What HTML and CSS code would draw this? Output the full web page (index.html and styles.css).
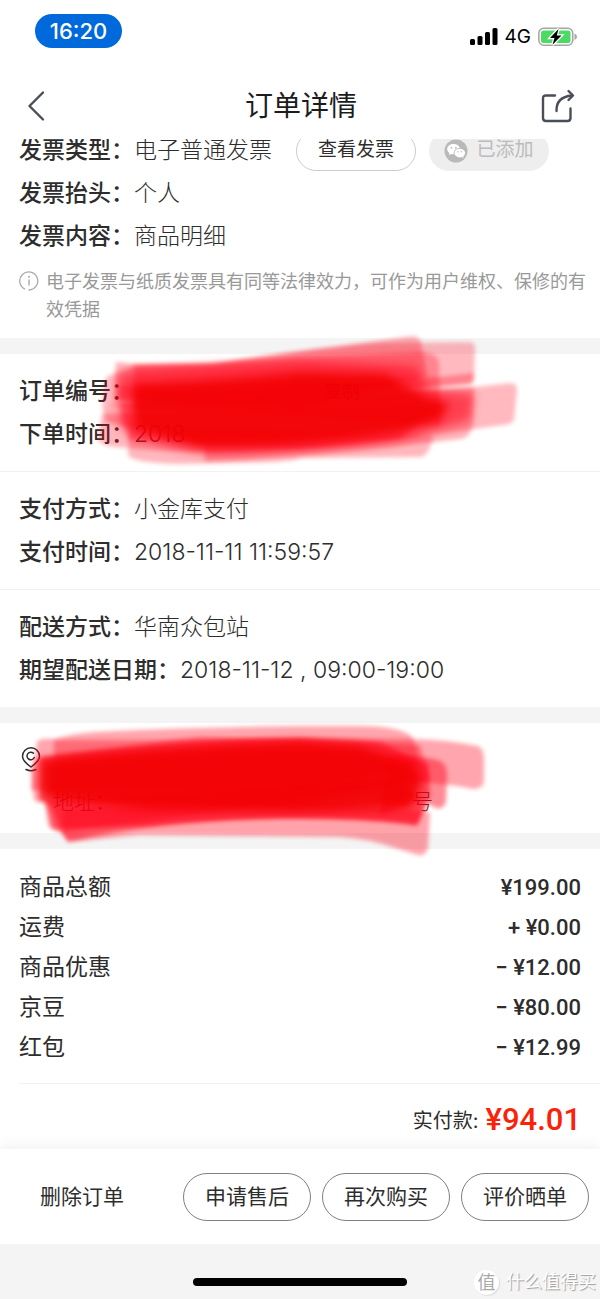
FILE: index.html
```html
<!DOCTYPE html>
<html lang="zh-CN">
<head>
    <meta charset="UTF-8">
    <meta name="viewport" content="width=device-width, initial-scale=1.0">
    <title>订单详情</title>
    <link rel="stylesheet" href="styles.css">
</head>
<body>

<div class="status-bar">
    <span class="time">16:20</span>
    <div class="status-icons">
        <svg width="28" height="18" viewBox="0 0 28 18">
            <rect x="0" y="11" width="5" height="6" rx="1.5"/>
            <rect x="7.500" y="8" width="5" height="9" rx="1.5"/>
            <rect x="15" y="4" width="5" height="13" rx="1.5"/>
            <rect x="22.500" y="0" width="5" height="17" rx="1.5"/>
        </svg>
        <span class="network">4G</span>
        <svg width="40" height="20" viewBox="0 0 40 20">
            <rect x="0.800" y="1.200" width="34" height="17" rx="5" fill="#fff" stroke="#a6a6a6" stroke-width="1.500"/>
            <rect x="3" y="3.500" width="29.500" height="12.500" rx="2.500" fill="#4cd964"/>
            <path d="M36.500 6.500 Q39 7.500 39 9.800 Q39 12 36.500 13Z" fill="#a6a6a6"/>
            <path d="M20.500 2 L12 11 L16.500 11 L14.500 17.800 L23.500 8.500 L18.800 8.500Z" fill="#000" stroke="#fff" stroke-width="2.600" paint-order="stroke"/>
        </svg>
    </div>
</div>

<header class="nav">
    <button class="icon-btn" aria-label="返回">
        <svg width="20" height="32" viewBox="0 0 20 32">
            <path d="M16 2.500 L2.500 16 L16 29.500" fill="none" stroke="#4a4e59" stroke-width="2.400" stroke-linecap="round" stroke-linejoin="round"/>
        </svg>
    </button>
    <h1>订单详情</h1>
    <button class="icon-btn" aria-label="分享">
        <svg width="34" height="34" viewBox="0 0 34 34" fill="none" stroke="#4a4e59" stroke-width="2.400" stroke-linecap="round" stroke-linejoin="round">
            <path d="M14 6.500 H5 Q2 6.500 2 9.500 V29 Q2 32 5 32 H26.500 Q29.500 32 29.500 29 V19.500"/>
            <path d="M15.500 22 Q15 8 31 6.500"/>
            <path d="M27.500 2 L32 6.500 L27.500 11"/>
        </svg>
    </button>
</header>

<main>
    <section class="invoice">
        <div class="row">
            <span class="label">发票类型：</span>
            <span class="value">电子普通发票</span>
            <div class="invoice-actions">
                <button class="pill">查看发票</button>
                <button class="pill pill-disabled" disabled>
                    <svg width="24" height="24" viewBox="0 0 24 24">
                        <circle cx="12" cy="12" r="11.500" fill="#b9b9b9"/>
                        <path d="M9.500 5 C5.800 5 3.200 7.200 3.200 10 C3.200 11.700 4 13 5.400 14 L4.900 16 L7.200 14.900 Q8.500 15.200 9.800 15.100 C9.300 11.500 12 8.900 15.700 9 C15.200 6.600 12.700 5 9.500 5Z" fill="#fff"/>
                        <path d="M15.700 9.800 C12.700 9.800 10.500 11.700 10.500 14.100 C10.500 16.600 12.900 18.400 15.700 18.400 Q16.800 18.400 17.800 18.100 L19.700 19 L19.200 17.300 C20.400 16.500 21.100 15.400 21.100 14.100 C21.100 11.700 18.700 9.800 15.700 9.800Z" fill="#fff"/>
                        <g fill="#b9b9b9">
                            <circle cx="7.500" cy="8.800" r=".9"/>
                            <circle cx="11.800" cy="8.800" r=".9"/>
                            <circle cx="14" cy="12.800" r=".7"/>
                            <circle cx="17.500" cy="12.800" r=".7"/>
                        </g>
                    </svg>
                    已添加
                </button>
            </div>
        </div>
        <div class="row">
            <span class="label">发票抬头：</span>
            <span class="value">个人</span>
        </div>
        <div class="row">
            <span class="label">发票内容：</span>
            <span class="value">商品明细</span>
        </div>
        <div class="note">
            <svg width="20" height="20" viewBox="0 0 20 20" fill="none" stroke="#aaa">
                <path d="M6 18.200 A9 9 0 1 1 9.500 19" stroke-width="1.300"/>
                <path d="M10 8.500 V14.500" stroke-width="1.400"/>
                <circle cx="10" cy="5.800" r="1" fill="#aaa" stroke="none"/>
            </svg>
            <p>电子发票与纸质发票具有同等法律效力，可作为用户维权、保修的有效凭据</p>
        </div>
    </section>

    <section class="order">
        <div class="group">
            <div class="row">
                <span class="label">订单编号：</span>
                <button class="copy">复制</button>
            </div>
            <div class="row">
                <span class="label">下单时间：</span>
                <span class="value">2018</span>
            </div>
            <svg class="marker marker-order" viewBox="0 0 600 150" aria-hidden="true">
                <defs>
                    <filter id="soft" x="-5%" y="-15%" width="110%" height="130%"><feGaussianBlur stdDeviation="2"/></filter>
                    <filter id="softer" x="-5%" y="-15%" width="110%" height="130%"><feGaussianBlur stdDeviation="5"/></filter>
                </defs>
                <g fill="#ff0018">
                    <path filter="url(#soft)" opacity=".3" d="M116 32 L134 34 L210 34 Q260 28 300 22 L412 6 Q419 6 421 12 L427 46 L300 80 L114 70Z"/>
                    <path filter="url(#soft)" opacity=".27" d="M134 35 L215 34 Q300 18 380 13 L470 12 Q475 13 475 18 L474 50 Q472 54 466 54 L134 80Z"/>
                    <path filter="url(#soft)" opacity=".28" d="M106 47 L134 36 Q250 32 300 28 L420 22 Q436 22 439 32 L441 95 L102 75Z"/>
                    <path filter="url(#soft)" opacity=".3" d="M118 55 Q250 60 300 50 L440 47 L474 43 L472 54 L300 70 L118 70Z"/>
                    <path filter="url(#soft)" opacity=".27" d="M120 75 L300 66 Q420 64 510 53 Q517 53 517 60 L514 90 Q511 95 503 95 Q400 110 300 118 L128 110Z"/>
                    <path filter="url(#soft)" opacity=".3" d="M102 76 L118 73 L474 58 L473 92 Q471 108 460 109 Q300 128 205 131 L205 115 L106 92Z"/>
                    <path filter="url(#soft)" opacity=".28" d="M102 84 L98 110 Q100 115 115 117 Q250 130 400 108 L440 75Z"/>
                    <path filter="url(#soft)" opacity=".28" d="M130 95 L128 125 Q132 133 180 134 Q300 133 300 128 L420 127 Q430 126 433 105 L300 100Z"/>
                    <path filter="url(#softer)" opacity=".5" d="M118 45 L134 40 L300 30 L415 36 L430 60 L474 64 L470 90 L395 112 Q300 124 205 124 L180 120 L134 108 L120 96Z"/>
                </g>
                <path fill="#f20000" opacity=".84" filter="url(#softer)" d="M133 54 Q250 48 300 42 L385 44 L425 66 L450 74 L440 90 L400 102 Q290 118 200 117 L175 110 L134 98Z"/>
            </svg>
        </div>
        <div class="group">
            <div class="row">
                <span class="label">支付方式：</span>
                <span class="value">小金库支付</span>
            </div>
            <div class="row">
                <span class="label">支付时间：</span>
                <span class="value">2018-11-11 11:59:57</span>
            </div>
        </div>
        <div class="group">
            <div class="row">
                <span class="label">配送方式：</span>
                <span class="value">华南众包站</span>
            </div>
            <div class="row">
                <span class="label">期望配送日期：</span>
                <span class="value">2018-11-12 , 09:00-19:00</span>
            </div>
        </div>
    </section>

    <section class="address">
        <svg class="pin" width="20" height="26" viewBox="0 0 20 26" fill="none" stroke="#2e2d2d" stroke-width="1.500" stroke-linecap="round">
            <path d="M10 20 Q1.500 14 1.500 9.300 A8.500 8.500 0 0 1 18.500 9.300 Q18.500 14 10 20Z"/>
            <path d="M12.500 6.300 A3.800 3.800 0 1 0 13.300 10.500"/>
            <path d="M5 22.500 Q10 24.800 15 22.500"/>
        </svg>
        <div class="address-text">
            <span>地址：</span>
            <span>号</span>
        </div>
        <svg class="marker marker-address" viewBox="0 0 600 150" aria-hidden="true">
            <g fill="#ff0018">
                <path filter="url(#soft)" opacity=".35" d="M37 22 Q38 18 55 19 Q70 14 95 12 Q200 7 300 6 L360 6 Q395 6 410 15 Q416 20 419 45 L300 70 L31 70Z"/>
                <path filter="url(#soft)" opacity=".35" d="M54 20 Q200 20 300 18 L410 19 Q450 20 478 26 Q483 28 484 37 L484 62 Q482 69 474 69 Q440 62 400 62 L300 85 L54 80Z"/>
                <path filter="url(#soft)" opacity=".35" d="M31 50 L34 80 Q36 82 45 82 L48 105 L52 109 L66 112 L430 60 L420 25 L200 17 L36 38Z"/>
                <path filter="url(#soft)" opacity=".45" d="M390 35 Q430 36 442 42 Q447 46 447 55 L446 82 Q443 90 436 88 L420 80 L380 95Z"/>
                <path filter="url(#soft)" opacity=".5" d="M45 80 L50 98 L52 108 L61 112 L68 121 L76 120 Q170 98 300 98 Q390 99 416 106 L426 84 L400 60Z"/>
                <path filter="url(#soft)" opacity=".36" d="M62 112 L68 122 L140 115 L340 117 Q370 119 395 128 L418 135 Q426 136 428 128 L430 92 L300 80 L64 90Z"/>
                <path filter="url(#soft)" opacity=".5" d="M40 38 Q180 20 300 18 L380 22 L412 38 L428 44 L430 76 L418 104 Q350 98 290 98 Q220 99 150 106 L60 108 L50 83 L40 80Z"/>
            </g>
            <path fill="#f20000" opacity=".86" filter="url(#softer)" d="M42 40 Q180 26 300 22 L360 26 L415 44 L422 64 L410 88 L300 92 L150 90 L56 80 L42 78Z"/>
        </svg>
    </section>

    <section class="amounts">
        <dl>
            <div class="amount"><dt>商品总额</dt><dd>¥199.00</dd></div>
            <div class="amount"><dt>运费</dt><dd>+ ¥0.00</dd></div>
            <div class="amount"><dt>商品优惠</dt><dd>− ¥12.00</dd></div>
            <div class="amount"><dt>京豆</dt><dd>− ¥80.00</dd></div>
            <div class="amount"><dt>红包</dt><dd>− ¥12.99</dd></div>
        </dl>
        <div class="total">
            <span>实付款:</span>
            <strong>¥94.01</strong>
        </div>
    </section>
</main>

<footer class="actions">
    <button class="btn-delete">删除订单</button>
    <div class="btn-group">
        <button class="btn">申请售后</button>
        <button class="btn">再次购买</button>
        <button class="btn">评价晒单</button>
    </div>
</footer>

<div class="home-bar">
    <span class="home-indicator"></span>
    <div class="watermark"><span class="watermark-logo">值</span>什么值得买</div>
</div>

</body>
</html>
```

FILE: styles.css
```css
* {
    box-sizing: border-box;
}
body {
    font-family: Inter, "Noto Sans CJK SC", sans-serif;
    background-color: white;
    color: #2e2d2d;
    line-height: 1.5;
    margin: 0;
}
button {
    font-family: inherit;
    line-height: inherit;
    color: inherit;
    background: none;
    border: none;
    padding: 0;
    cursor: pointer;
}
h1, p, dl, dd {
    margin: 0;
}
svg {
    display: block;
    flex-shrink: 0;
}
.status-bar {
    display: flex;
    justify-content: space-between;
    align-items: flex-start;
    height: 72px;
    padding: 14px 22px 0 35px;
}
.time {
    background: #0069dc;
    color: white;
    width: 87px;
    line-height: 34px;
    border-radius: 17px;
    text-align: center;
    font-size: 22px;
    font-weight: 500;
}
.status-icons {
    display: flex;
    align-items: center;
    gap: 7px;
    padding-top: 11px;
    color: black;
}
.network {
    font-size: 19px;
    line-height: 24px;
}
.nav {
    display: flex;
    justify-content: space-between;
    align-items: center;
    height: 67px;
    padding: 0 25px 0 27px;
}
.nav h1 {
    font-size: 28px;
    font-weight: 400;
    color: #1c1c1f;
}
.icon-btn {
    display: flex;
    width: 34px;
}
section {
    padding: 0 19px;
    position: relative;
}
.row {
    display: flex;
    align-items: center;
    height: 43px;
    font-size: 23px;
    white-space: nowrap;
}
.label {
    font-weight: 500;
}
.value {
    font-weight: 300;
}
.invoice {
    overflow: hidden;
    padding-bottom: 14px;
}
.invoice .row:first-child {
    margin-top: -10px;
}
.invoice-actions {
    display: flex;
    gap: 13px;
    margin-left: 24px;
}
.pill {
    display: flex;
    align-items: center;
    justify-content: center;
    gap: 8px;
    width: 120px;
    height: 40px;
    border: 1px solid #ccc;
    border-radius: 20px;
    font-size: 19px;
}
.pill-disabled {
    background: #eee;
    border-color: #eee;
    color: #bbb;
}
.note {
    display: flex;
    gap: 7px;
    margin-top: 10px;
    color: #999;
    font-size: 18px;
    line-height: 28px;
}
.note svg {
    margin-top: 3px;
}
.note p {
    margin-right: -10px;
}
.order {
    border-top: 16px solid #f4f4f4;
    padding: 0;
}
.group {
    position: relative;
    padding: 16px 19px 15px;
    border-bottom: 1px solid #f2f2f2;
}
.group:last-child {
    border-bottom: none;
}
.copy {
    font-size: 18px;
    margin-left: 190px;
}
.marker {
    position: absolute;
    left: 0;
    width: 600px;
    height: 150px;
    pointer-events: none;
}
.marker-order {
    top: -24px;
}
.marker-address {
    top: -3px;
}
.address {
    display: flex;
    gap: 12px;
    height: 142px;
    border-top: 16px solid #f4f4f4;
    border-bottom: 16px solid #f4f4f4;
    padding-top: 24px;
    padding-left: 21px;
}
.address-text {
    display: flex;
    justify-content: space-between;
    width: 380px;
    padding-top: 38px;
    font-size: 21px;
    font-weight: 300;
    line-height: 34px;
}
.amounts dl {
    padding: 18px 0 16px;
    border-bottom: 1px solid #f2f2f2;
    margin-right: -19px;
    padding-right: 19px;
}
.amount {
    display: flex;
    justify-content: space-between;
    align-items: center;
    height: 40px;
    font-size: 23px;
}
.amount dd {
    font-family: Roboto, sans-serif;
    font-size: 22px;
    font-weight: 500;
}
.total {
    display: flex;
    justify-content: flex-end;
    align-items: center;
    gap: 7px;
    height: 65px;
    padding-top: 8px;
    font-size: 20px;
}
.total strong {
    font-family: Roboto, sans-serif;
    font-size: 31px;
    font-weight: 500;
    color: #fa2209;
}
.actions {
    position: relative;
    display: flex;
    justify-content: space-between;
    align-items: center;
    height: 95px;
    padding: 0 11px 0 40px;
    background: white;
    box-shadow: 0 -3px 14px rgba(0, 0, 0, 0.06);
}
.btn-group {
    display: flex;
    gap: 11px;
}
.btn, .btn-delete {
    font-size: 21px;
}
.btn {
    width: 128px;
    height: 48px;
    border: 1px solid #808080;
    border-radius: 24px;
}
.home-bar {
    position: relative;
    display: flex;
    justify-content: center;
    align-items: flex-start;
    height: 55px;
    padding-top: 34px;
    background: #f4f4f4;
}
.home-indicator {
    width: 214px;
    height: 8px;
    border-radius: 4px;
    background: black;
}
.watermark {
    position: absolute;
    right: 4px;
    bottom: 4px;
    display: flex;
    align-items: center;
    gap: 7px;
    color: white;
    font-size: 18px;
    line-height: 26px;
    text-shadow: 1px 1px 1px #999;
}
.watermark-logo {
    width: 25px;
    line-height: 25px;
    border-radius: 50%;
    background: white;
    color: #aaa;
    text-align: center;
    text-shadow: none;
    box-shadow: 1px 1px 1px #ddd;
}
```
